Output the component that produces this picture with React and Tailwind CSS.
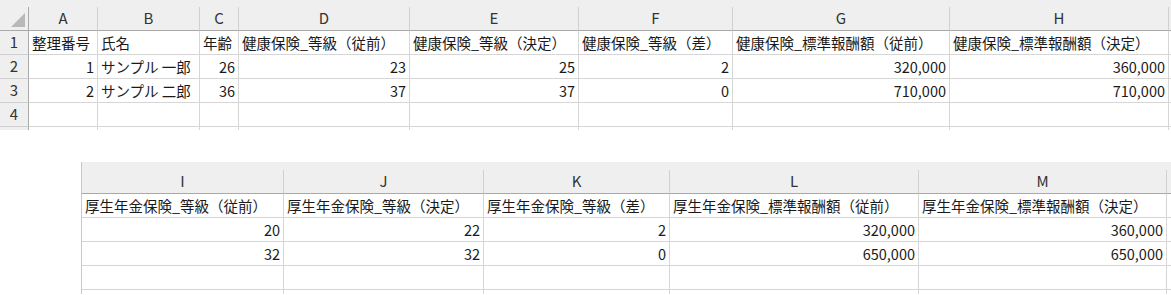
const topCols = ['A', 'B', 'C', 'D', 'E', 'F', 'G', 'H'];
const topRows = [
  { n: '1', cells: ['整理番号', '氏名', '年齢', '健康保険_等級（従前）', '健康保険_等級（決定）', '健康保険_等級（差）', '健康保険_標準報酬額（従前）', '健康保険_標準報酬額（決定）'], text: true },
  { n: '2', cells: ['1', 'サンプル 一郎', '26', '23', '25', '2', '320,000', '360,000'] },
  { n: '3', cells: ['2', 'サンプル 二郎', '36', '37', '37', '0', '710,000', '710,000'] },
  { n: '4', cells: ['', '', '', '', '', '', '', ''] },
];

const bottomCols = ['I', 'J', 'K', 'L', 'M'];
const bottomRows = [
  { cells: ['厚生年金保険_等級（従前）', '厚生年金保険_等級（決定）', '厚生年金保険_等級（差）', '厚生年金保険_標準報酬額（従前）', '厚生年金保険_標準報酬額（決定）'], text: true },
  { cells: ['20', '22', '2', '320,000', '360,000'] },
  { cells: ['32', '32', '0', '650,000', '650,000'] },
  { cells: ['', '', '', '', ''] },
];

const font = { fontFamily: '"Noto Sans CJK JP", "Liberation Sans", sans-serif' };

function Cell({ value, header }) {
  // text left, numbers right, like a sheet
  const isText = header || /[^\d,]/.test(value);
  return (
    <div
      className={`h-full flex items-center border-r border-b border-[#d6d6d6] bg-white text-[14.5px] text-[#1a1a1a] whitespace-nowrap overflow-hidden px-[3px] ${isText ? 'justify-start' : 'justify-end'}`}
    >
      {value}
    </div>
  );
}

function ColHead({ label, last }) {
  return (
    <div className={`h-full flex items-center justify-center bg-[#efefef] border-b border-[#a9a9a9] ${last ? '' : 'border-r border-r-[#d0d0d0]'} text-[15px] text-[#333]`}>
      {label}
    </div>
  );
}

function TopSheet() {
  const grid = 'grid grid-cols-[29px_69px_102px_39px_171px_169px_154px_217px_219px_1fr]';
  return (
    <div>
      <div className="h-[7px] bg-[#efefef]" />
      <div className={`${grid} h-[24px]`}>
        <div className="relative h-full bg-[#efefef] border-r border-b border-[#a9a9a9]">
          <svg className="absolute right-[3px] bottom-[3px]" width="14" height="14" viewBox="0 0 14 14">
            <polygon points="14,0 14,14 0,14" fill="#b8b8b8" />
          </svg>
        </div>
        {topCols.map((c) => (
          <ColHead key={c} label={c} />
        ))}
        <ColHead label="" last />
      </div>
      {topRows.map((r) => (
        <div key={r.n} className={`${grid} h-[24px]`}>
          <div className="h-full flex items-center justify-center bg-[#efefef] border-r border-r-[#a9a9a9] border-b border-b-[#d0d0d0] text-[15px] text-[#333]">
            {r.n}
          </div>
          {r.cells.map((v, i) => (
            <Cell key={i} value={v} header={r.text} />
          ))}
          <div className="h-full border-b border-[#d6d6d6] bg-white" />
        </div>
      ))}
      <div className={`${grid} h-[3px]`}>
        <div className="h-full bg-[#efefef] border-r border-[#a9a9a9]" />
        {topCols.map((c) => (
          <div key={c} className="h-full border-r border-[#d6d6d6]" />
        ))}
      </div>
    </div>
  );
}

function BottomSheet() {
  const grid = 'grid grid-cols-[202px_200px_186px_249px_248px_1fr]';
  return (
    <div className="pl-[81px]">
      <div className="border-l border-[#c8c8c8]">
        <div className="h-[8px] bg-[#efefef]" />
        <div className={`${grid} h-[24px]`}>
          {bottomCols.map((c) => (
            <ColHead key={c} label={c} />
          ))}
          <ColHead label="" last />
        </div>
        {bottomRows.map((r, ri) => (
          <div key={ri} className={`${grid} h-[24px]`}>
            {r.cells.map((v, i) => (
              <Cell key={i} value={v} header={r.text} />
            ))}
            <div className="h-full border-b border-[#d6d6d6] bg-white" />
          </div>
        ))}
        <div className={`${grid} h-[4px]`}>
          {bottomCols.map((c) => (
            <div key={c} className="h-full border-r border-[#d6d6d6]" />
          ))}
        </div>
      </div>
    </div>
  );
}

export default function App() {
  return (
    <div className="w-[1171px] h-[295px] overflow-hidden bg-white" style={font}>
      <TopSheet />
      <div className="h-[32px]" />
      <BottomSheet />
    </div>
  );
}
